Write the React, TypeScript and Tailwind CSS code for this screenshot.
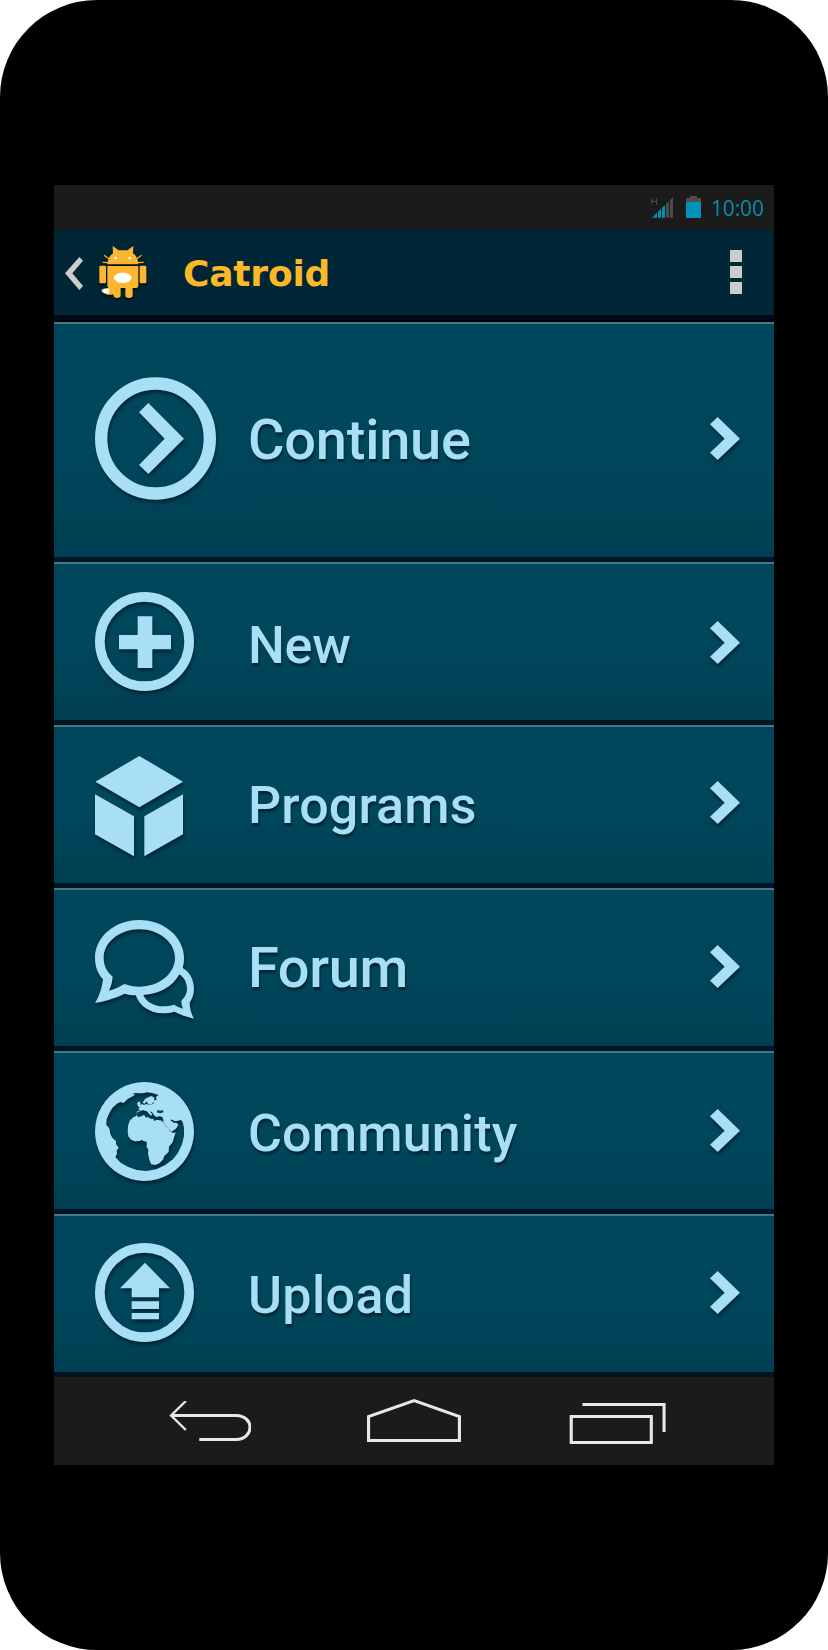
import type { ReactNode } from "react";

const shadow = "block shrink-0 overflow-visible drop-shadow-[1px_3px_1.5px_rgba(0,20,30,0.6)]";

const ContinueIcon = () => (
  <svg className={shadow} width="121" height="123" viewBox="45 51 363 369" fill="#a8dff5">
    <ellipse cx="226.5" cy="235.5" rx="163" ry="165" fill="none" stroke="#a8dff5" strokeWidth="37" />
    <path d="M177 157 205 129 312 236 205 342 177 315 254 236Z" />
  </svg>
);

const Ring = ({ cy }: { cy: number }) => (
  <circle cx="193.500" cy={cy} r="134" fill="none" stroke="#a8dff5" strokeWidth="29" />
);

const NewIcon = () => (
  <svg className={shadow} width="99" height="99" viewBox="45 66 297 297" fill="#a8dff5">
    <Ring cy={214.5} />
    <path d="M173 139H217V195H273V238H217V294H173V238H117V195H173Z" />
  </svg>
);

const ProgramsIcon = () => (
  <svg className={shadow} width="88" height="101" viewBox="45 62 264 303" fill="#a8dff5">
    <path d="M178 62 309 139 178 216 46 139ZM45 177 162 243V363L45 297ZM309 177 193 243V363L309 297Z" />
  </svg>
);

const ForumIcon = () => (
  <svg className={shadow} width="99" height="99" viewBox="45 60 297 297" fill="#a8dff5">
    <path
      fillRule="evenodd"
      d="M45 309C58 290 66 263 69 238C53 221 45 199 45 174C45 111 104 60 178 60C252 60 312 111 312 174C312 184 311 194 308 204C330 216 342 240 342 267C342 282 337 296 329 308C329 325 334 342 342 356C321 351 300 343 283 335C272 339 260 340 248 340C210 340 178 318 167 286C156 286 145 285 134 281C109 293 77 304 45 309ZM87 272C103 268 119 261 133 252C147 257 162 260 178 260C237 260 285 221 285 174C285 127 237 88 178 88C119 88 71 127 71 174C71 197 81 216 98 230C97 245 93 260 87 272ZM190 285C199 306 222 319 248 319C260 319 272 318 282 314C290 319 299 323 309 326C306 318 304 310 304 302C315 292 321 281 321 267C321 248 312 232 298 223C279 259 238 283 190 285Z"
    />
  </svg>
);

const CommunityIcon = () => (
  <svg className={shadow} width="99" height="99" viewBox="45 66 297 297" fill="#a8dff5">
    <path
      fillRule="evenodd"
      d="M193.500 66A148.500 148.500 0 1 1 193.400 66ZM134 126 144 116 160 108 166 103 156 103 146 108 165 99 179 100 193 99 200 97 216 99 236 105 228 111 230 119 223 121 220 131 211 134 205 137 198 133 190 137 187 131 180 136 182 129 178 126 175 136 180 141 174 148 182 151 170 155 168 168 160 172 149 182 144 197 143 215 145 229 153 239 164 244 178 243 186 240 192 244 200 245 200 261 205 269 204 281 208 299 213 313 227 315 239 309 249 299 253 288 266 276 267 260 278 247 286 220 291 215 284 218 277 218 266 208 259 198 253 190 248 187 246 182 231 179 222 183 220 177 211 176 204 171 198 173 192 164 186 168 177 171 170 168 169 158 180 154 189 150 200 154 207 161 213 167 217 164 212 157 208 153 216 157 224 168 229 171 239 169 247 171 250 179 250 187 261 202 273 217 288 206 295 195 290 188 281 188 270 179 276 179 285 184 294 182 303 180 308 187 312 204 312 228 306 253 294 278 279 298 256 315 229 328 199 333 170 330 145 321 122 308 106 291 111 282 110 272 116 263 108 252 108 244 97 233 91 222 88 205 79 195 80 178 87 161 97 144 111 131 121 126 130 129Z"
    />
    <path d="M200 114 214 108 223 113 222 125 213 134 204 132 200 124 194 131 188 128 193 119ZM171 129 178 124 180 134 187 139 181 143 174 139ZM190 134 204 133 221 141 216 153 195 151 182 150 184 141Z" />
    <path d="M231 150 241 152 248 150 251 156 242 160 232 158Z" fill="#00455a" />
  </svg>
);

const UploadIcon = () => (
  <svg className={shadow} width="99" height="99" viewBox="45 69 297 297" fill="#a8dff5">
    <Ring cy={217.5} />
    <path d="M195 128 270 205H237V232H155V205H120ZM155 244H237V267H155ZM155 279H237V298H155Z" />
  </svg>
);

const Chevron = () => (
  <svg className={shadow} width="30" height="43" viewBox="90 81 90 129" fill="#a8dff5">
    <path d="M90 103 113 81 180 146 113 210 90 188 134 146Z" />
  </svg>
);

const CatLogo = () => (
  <svg className="mt-[16px] ml-[16px] block shrink-0 overflow-visible drop-shadow-[0_2px_1px_rgba(0,0,0,0.6)]" width="48" height="53" viewBox="178 213 144 159" fill="#fcb62f">
    <path d="M203 268C204 253 210 242 220 235L219 213 237 226H263L281 213 280 235C290 242 295 253 296 268Z" />
    <path d="M203 273H296V332Q296 339 289 339H279V361Q279 369 268 369Q257 369 257 361V339H243V361Q243 369 232 369Q221 369 221 358Q209 362 196 356Q184 351 186 345Q190 338 210 340Q203 338 203 332Z" />
    <rect x="179" y="272" width="20" height="53" rx="4" />
    <rect x="300" y="272" width="20" height="53" rx="4" />
    <path d="M193 241 209 252M189 262 207 263M306 241 290 252M312 262 292 263" fill="none" stroke="#fcb62f" strokeWidth="3.500" />
    <path d="M222 308C225 298 236 293 249 293C264 293 274 299 276 308C273 318 263 324 249 324C235 324 226 318 222 308ZM187 346C190 341 200 339 211 341C205 345 211 350 206 356C196 357 185 351 187 346Z" fill="#fff" />
    <circle cx="228" cy="249" r="4" fill="#fff" />
    <circle cx="270" cy="249" r="4" fill="#fff" />
  </svg>
);

type RowProps = {
  icon: ReactNode;
  label: string;
  height: string;
  iconTop: string;
  labelClass: string;
  chevronTop: string;
};

const Row = ({ icon, label, height, iconTop, labelClass, chevronTop }: RowProps) => (
  <button
    className={`flex w-full shrink-0 items-start border-t-2 border-b-[5px] border-t-[#417a8b] border-b-[#001520] bg-linear-to-b from-[#00475c] from-50% to-[#003f53] pr-[34px] pl-[41px] text-left ${height}`}
  >
    <span className={`block w-[153px] shrink-0 ${iconTop}`}>{icon}</span>
    <span
      className={`block flex-1 font-['Roboto'] leading-[60px] font-medium whitespace-nowrap text-[#a8dff5] [text-shadow:1px_3px_2px_rgba(0,20,30,0.6)] ${labelClass}`}
    >
      {label}
    </span>
    <span className={`block shrink-0 ${chevronTop}`}>
      <Chevron />
    </span>
  </button>
);

export default function App() {
  return (
    <div className="h-[1650px] w-[828px] bg-white">
      <div className="flex h-full w-full flex-col items-center rounded-[97px] bg-black pt-[185px]">
        <main className="flex h-[1280px] w-[720px] flex-col overflow-hidden">
          <header className="flex h-[45px] shrink-0 items-start justify-end bg-[#1b1b1b] text-[#0092b8]">
            <svg className="mt-[12px] block" width="23" height="21" viewBox="93 67 69 63">
              <path d="M95 70V90M110 70V90M95 80H110" stroke="#4d4d4d" strokeWidth="3" fill="none" />
              <path d="M96 129 111 114V129ZM114 111 123 102V129H114ZM126 99 135 91V129H126Z" fill="#0092b8" />
              <path d="M138 88 147 79V129H138ZM150 76 159 68V129H150Z" fill="#4d4d4d" />
            </svg>
            <svg className="mt-[11px] ml-[12px] block" width="15" height="22" viewBox="0 0 15 22">
              <path d="M4 0H11V2H15V6H0V2H4Z" fill="#4d4d4d" />
              <path d="M0 6H15V22H0Z" fill="#0092b8" />
            </svg>
            <span className="mt-[7px] ml-[10px] block w-[63px] origin-left scale-x-94 font-['Open_Sans'] text-[22px] leading-[30px]">10:00</span>
          </header>
          <div className="flex h-[85px] shrink-0 items-start bg-[#002636]">
            <svg className="mt-[27px] ml-[11px] block shrink-0" width="18" height="33" viewBox="75 246 54 99">
              <path d="M118 246 129 257 97 295 129 333 118 345 75 295Z" fill="#cccccc" />
            </svg>
            <CatLogo />
            <h1 className="mt-[24px] ml-[36px] block flex-1 font-['DejaVu_Sans'] text-[36px] leading-[40px] font-bold tracking-[-0.2px] text-[#fdb827]">Catroid</h1>
            <div className="mt-[20px] mr-[32px] flex flex-col gap-1">
              <i className="block size-3 bg-[#cccccc]" />
              <i className="block size-3 bg-[#cccccc]" />
              <i className="block size-3 bg-[#cccccc]" />
            </div>
          </div>
          <div className="h-[7px] shrink-0 border-b-2 border-black bg-[#000a14]" />
          <Row icon={<ContinueIcon />} label="Continue" height="h-[240px]" iconTop="mt-[53px]" labelClass="mt-[86px] text-[56px] tracking-[-0.25px]" chevronTop="mt-[93px]" />
          <Row icon={<NewIcon />} label="New" height="h-[163px]" iconTop="mt-[28px]" labelClass="mt-[52px] text-[52px] tracking-[-0.3px]" chevronTop="mt-[57px]" />
          <Row icon={<ProgramsIcon />} label="Programs" height="h-[163px]" iconTop="mt-[29px]" labelClass="mt-[49px] text-[52px] tracking-[0.15px]" chevronTop="mt-[54px]" />
          <Row icon={<ForumIcon />} label="Forum" height="h-[163px]" iconTop="mt-[30px]" labelClass="mt-[48px] text-[56px] tracking-[-0.4px]" chevronTop="mt-[55px]" />
          <Row icon={<CommunityIcon />} label="Community" height="h-[163px]" iconTop="mt-[29px]" labelClass="mt-[51px] text-[52px] tracking-[0.15px]" chevronTop="mt-[56px]" />
          <Row icon={<UploadIcon />} label="Upload" height="h-[163px]" iconTop="mt-[27px]" labelClass="mt-[50px] text-[52px] tracking-[0.35px]" chevronTop="mt-[55px]" />
          <nav className="flex h-[88px] shrink-0 items-start bg-[#1b1b1b]">
            <svg className="mt-[24px] ml-[114.6px] block shrink-0" width="82.6" height="41" viewBox="54 123 240 123" preserveAspectRatio="none" fill="none" stroke="#e8e8e8">
              <path d="M64 166.500H249C304 168 302 237 249 238.500H142" strokeWidth="9" />
              <path d="M103 123 60 166.500 103 210" strokeWidth="7" />
            </svg>
            <svg className="mt-[22px] ml-[115.7px] block shrink-0" width="95" height="43" viewBox="630 117 276 129" preserveAspectRatio="none" fill="none" stroke="#e8e8e8" strokeWidth="9">
              <path d="M634.500 241.500V170L767 122 898.500 170V241.500Z" />
            </svg>
            <svg className="mt-[26px] ml-[107.5px] block shrink-0" width="99.2" height="41" viewBox="1218 129 288 123" preserveAspectRatio="none" fill="none" stroke="#e8e8e8" strokeWidth="9">
              <path d="M1224.500 169.500H1457V247.500H1224.500ZM1257 133.500H1494V216" />
            </svg>
          </nav>
        </main>
      </div>
    </div>
  );
}
